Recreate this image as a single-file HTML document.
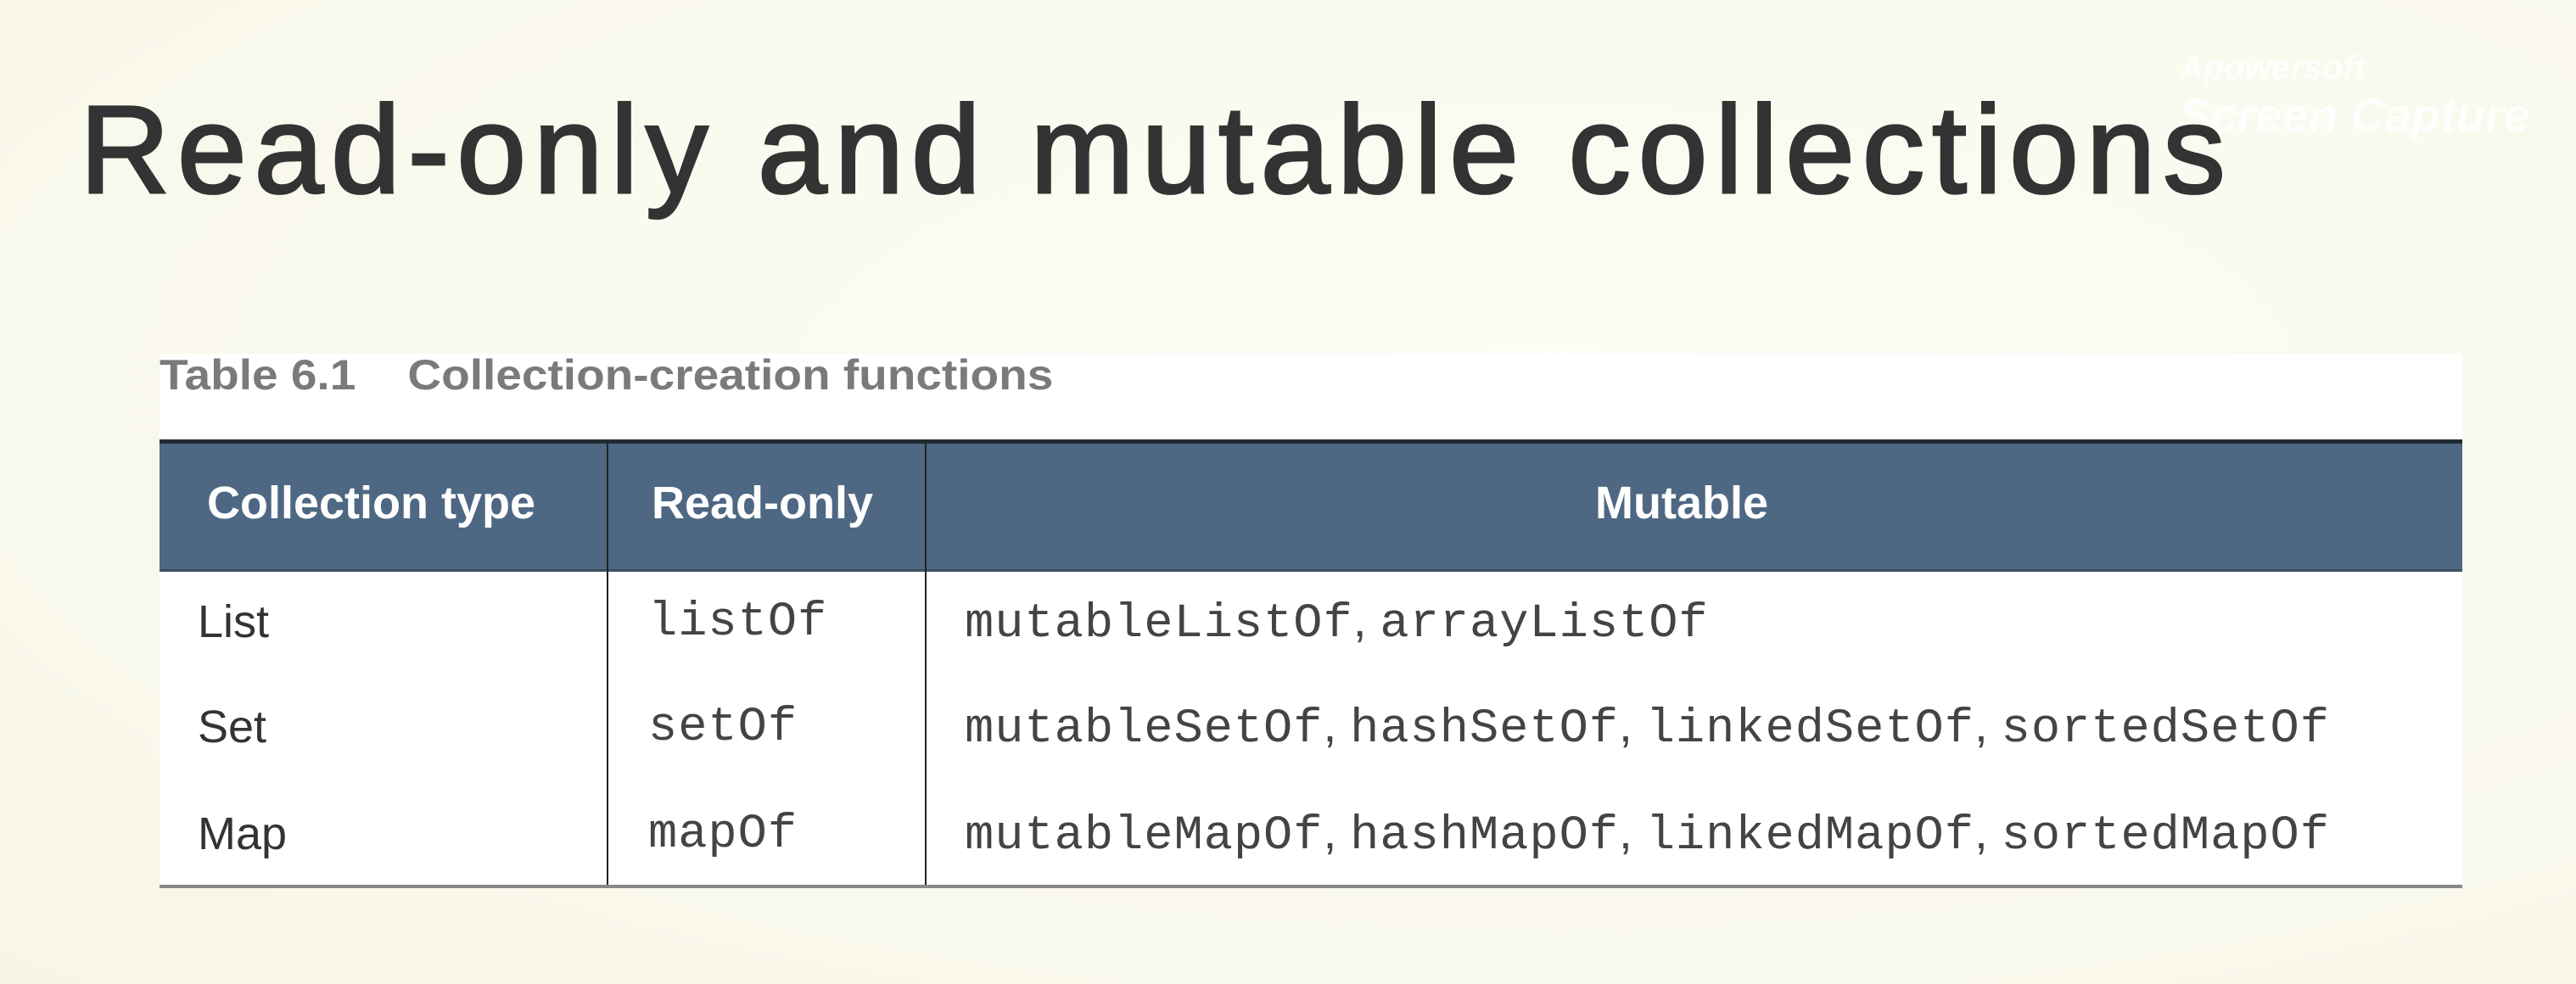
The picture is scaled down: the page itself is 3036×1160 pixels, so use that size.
<!DOCTYPE html>
<html><head><meta charset="utf-8"><style>
html,body{margin:0;padding:0}
body{width:3036px;height:1160px;position:relative;overflow:hidden;background:radial-gradient(ellipse at 60% 40%,#fdfdf6 0%,#f9f8ec 70%,#f7f5e6 100%);font-family:"Liberation Sans",sans-serif}
.t{position:absolute;white-space:nowrap;line-height:1}
#title{left:94px;top:104px;font-size:147px;font-weight:normal;-webkit-text-stroke:3px #333;color:#333;letter-spacing:8.8px}
#box{position:absolute;left:188px;top:417px;width:2714px;height:630px;background:#fff}
#cap{left:188px;top:417px;font-size:50px;font-weight:bold;color:#7a7a7a;transform:scaleX(1.1);transform-origin:left}
#hdr{position:absolute;left:188px;top:518px;width:2714px;height:156px;background:#4e6883;border-top:5px solid #222a33;box-sizing:border-box;border-bottom:3px solid #3b4f63}
.h{color:#fff;font-weight:bold;font-size:54px;top:566px;transform:scaleX(1.0);transform-origin:left}
.v{position:absolute;width:2px;background:#222;top:520px;height:526px}
#bot{position:absolute;left:188px;top:1043px;width:2714px;height:4px;background:#888}
.b{font-size:54px;color:#333}
.m{font-family:"Liberation Mono",monospace;font-size:57px;color:#444;letter-spacing:1px}
.m span{font-family:"Liberation Sans",sans-serif;letter-spacing:0}
#wm{left:2568px;top:46px;color:#fff;opacity:.85;font-style:italic;font-weight:bold;font-size:56px;line-height:56px}
</style></head><body>
<div class="t" id="wm"><span style="font-size:40px">Apowersoft</span><br>Screen Capture</div>
<div class="t" id="title">Read-only and mutable collections</div>
<div id="box"></div>
<div class="t" id="cap">Table 6.1&nbsp;&nbsp;&nbsp; Collection-creation functions</div>
<div id="hdr"></div>
<div class="v" style="left:715px"></div>
<div class="v" style="left:1090px"></div>
<div id="bot"></div>
<div class="t h" style="left:244px">Collection type</div>
<div class="t h" style="left:768px">Read-only</div>
<div class="t h" style="left:1880px">Mutable</div>
<div class="t b" style="left:233px;top:706px">List</div>
<div class="t b" style="left:233px;top:830px">Set</div>
<div class="t b" style="left:233px;top:956px">Map</div>
<div class="t m" style="left:764px;top:706px">listOf</div>
<div class="t m" style="left:764px;top:830px">setOf</div>
<div class="t m" style="left:764px;top:956px">mapOf</div>
<div class="t m" style="left:1137px;top:703px">mutableListOf<span>, </span>arrayListOf</div>
<div class="t m" style="left:1137px;top:827px">mutableSetOf<span>, </span>hashSetOf<span>, </span>linkedSetOf<span>, </span>sortedSetOf</div>
<div class="t m" style="left:1137px;top:953px">mutableMapOf<span>, </span>hashMapOf<span>, </span>linkedMapOf<span>, </span>sortedMapOf</div>
</body></html>
